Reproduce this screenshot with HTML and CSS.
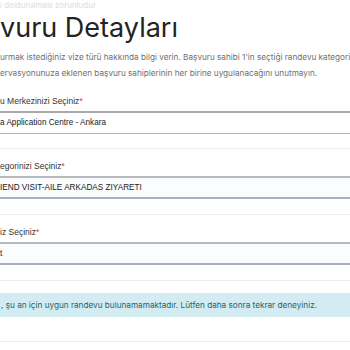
FILE: index.html
```html
<!DOCTYPE html>
<html lang="tr">
<head>
<meta charset="utf-8">
<link rel="stylesheet" href="styles.css">
</head>
<body>
<div class="page">
  <div class="note">ı doldurulması zorunludur</div>
  <h1 class="title">vuru Detayları</h1>
  <p class="desc">urmak istediğiniz vize türü hakkında bilgi verin. Başvuru sahibi 1'in seçtiği randevu kategoris<br>ervasyonunuza eklenen başvuru sahiplerinin her birine uygulanacağını unutmayın.</p>

  <div class="group first">
    <label class="label">u Merkezinizi Seçiniz<span class="req">*</span></label>
    <div class="select">a Application Centre - Ankara</div>
  </div>

  <div class="group">
    <label class="label">egorinizi Seçiniz<span class="req">*</span></label>
    <div class="select alt">IEND VISIT-AILE ARKADAS ZIYARETI</div>
  </div>

  <div class="group">
    <label class="label">iz Seçiniz<span class="req">*</span></label>
    <div class="select alt">t</div>
  </div>

  <div class="alert-wrap">
    <div class="alert">, şu an için uygun randevu bulunamamaktadır. Lütfen daha sonra tekrar deneyiniz.</div>
  </div>
</div>
</body>
</html>
```

FILE: styles.css
```css
html, body {
  margin: 0;
  padding: 0;
  background: #ffffff;
  overflow: hidden;
}

.page {
  width: 350px;
  overflow: hidden;
  font-family: Inter, "Noto Sans", sans-serif;
  white-space: nowrap;
}

.note {
  height: 12px;
  line-height: 11px;
  font-size: 8px;
  color: #dcdcdc;
}

.title {
  margin: 1px 0 0 0;
  height: 30px;
  line-height: 30px;
  font-size: 27px;
  font-weight: 400;
  color: #232323;
}

.desc {
  margin: 6px 0 0 0;
  font-size: 8.2px;
  line-height: 16px;
  color: #6f6f6f;
}

.group {
  padding-top: 11px;
  padding-bottom: 15px;
  border-bottom: 1px solid #ececec;
}

.group.first {
  padding-top: 14px;
  padding-bottom: 14px;
}

.label {
  display: block;
  height: 12px;
  line-height: 12px;
  font-family: "Liberation Sans", Arial, sans-serif;
  font-size: 8.5px;
  color: #333333;
  margin-bottom: 4px;
}

.req {
  color: #d9383a;
}

.select {
  height: 20px;
  line-height: 20px;
  border-top: 2px solid #a9a9ab;
  border-bottom: 1px solid #b3b6ba;
  background: #ffffff;
  font-family: "Liberation Sans", Arial, sans-serif;
  font-size: 8.2px;
  color: #222222;
}

.select.alt {
  border-top: 2px solid #b6b9be;
  border-bottom: 2px solid #a6b1bd;
  background: #fbfcfd;
  height: 19px;
  line-height: 19px;
}

.alert-wrap {
  padding-top: 12px;
  padding-bottom: 24px;
  border-bottom: 1px solid #ececec;
}

.alert {
  height: 24px;
  line-height: 24px;
  background: #d2ecf1;
  color: #24646f;
  font-size: 8.2px;
  padding-left: 1px;
}
```
